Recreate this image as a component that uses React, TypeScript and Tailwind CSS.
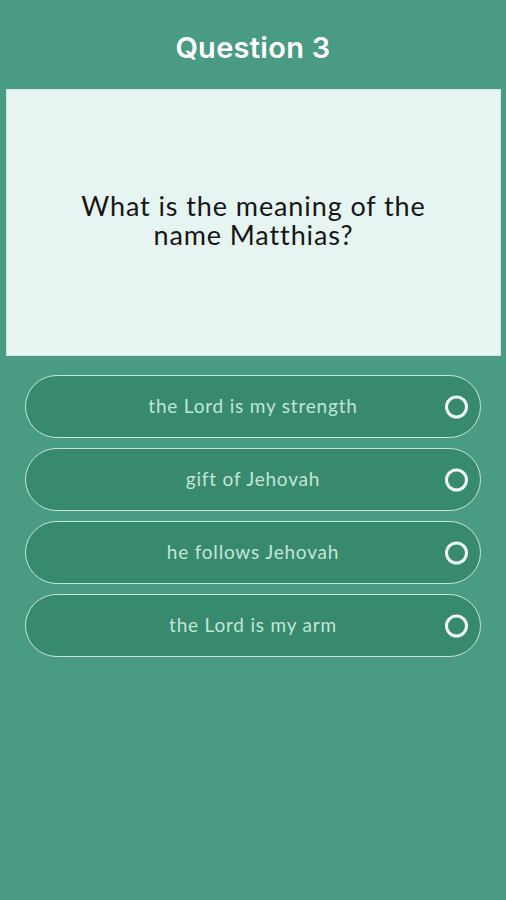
const options = [
  "the Lord is my strength",
  "gift of Jehovah",
  "he follows Jehovah",
  "the Lord is my arm",
];

export default function App() {
  return (
    <div className="w-[506px] h-[900px] bg-[#4a9b83] flex flex-col font-['Lato',sans-serif]">
      {/* Header */}
      <div className="h-[89px] flex items-center justify-center pt-[6px]">
        <h1 className="text-white text-[29px] font-semibold font-['Inter',sans-serif] tracking-[0.3px]">Question 3</h1>
      </div>

      {/* Question card */}
      <div className="ml-[6px] mr-[5px] h-[267px] bg-[#e6f5f1] border border-[#cde8e0] flex flex-col items-center justify-center px-6 pb-[6px]">
        <p className="text-[#161616] text-[27px] leading-[29px] tracking-[0.9px] text-center">What is the meaning of the</p>
        <p className="text-[#161616] text-[27px] leading-[29px] tracking-[0.9px] text-center">name Matthias?</p>
      </div>

      {/* Answers */}
      <div className="mt-[19px] px-[25px] flex flex-col gap-[10px]">
        {options.map((opt) => (
          <button
            key={opt}
            className="relative h-[63px] w-full rounded-full bg-[#378a6d] border-[1.5px] border-[#c7e6da] flex items-center justify-center"
          >
            <span className="text-[#c3e5d8] text-[19px] tracking-[0.8px]">{opt}</span>
            <span className="absolute right-[12px] top-1/2 -translate-y-1/2 w-[23px] h-[23px] rounded-full border-[3px] border-[#eef8f4]" />
          </button>
        ))}
      </div>
    </div>
  );
}
